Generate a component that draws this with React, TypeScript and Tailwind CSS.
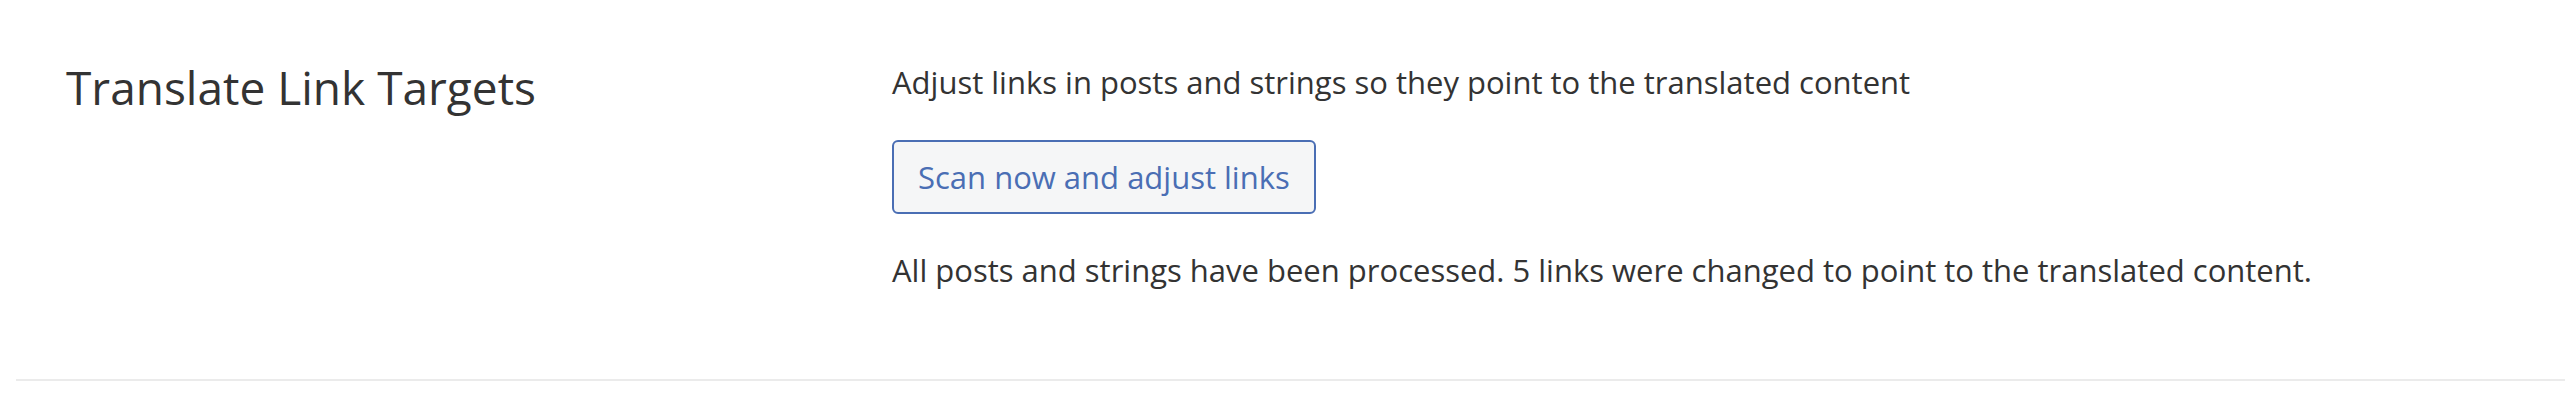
export default function App() {
  return (
    <div className="min-h-screen bg-white font-['Open_Sans',Arial,sans-serif] text-[#333]">
      <div className="ml-[16px] flex items-start border-b-2 border-[#ebebeb] pt-[58px] pb-[89px]">
        <div className="w-[876px] shrink-0 pl-[50px]">
          <h2 className="text-[46px] leading-[58px] font-normal">Translate Link Targets</h2>
        </div>
        <div className="pt-[4px]">
          <p className="text-[31px] leading-[40px]">
            Adjust links in posts and strings so they point to the translated content
          </p>
          <button
            type="button"
            className="mt-[38px] h-[74px] rounded-[6px] border-2 border-[#4a6eb4] bg-[#f5f6f7] px-[24px] text-[31px] leading-[40px] text-[#4a6eb4]"
          >
            Scan now and adjust links
          </button>
          <p className="mt-[36px] text-[31px] leading-[40px]">
            All posts and strings have been processed. 5 links were changed to point to the translated content.
          </p>
        </div>
      </div>
    </div>
  );
}
